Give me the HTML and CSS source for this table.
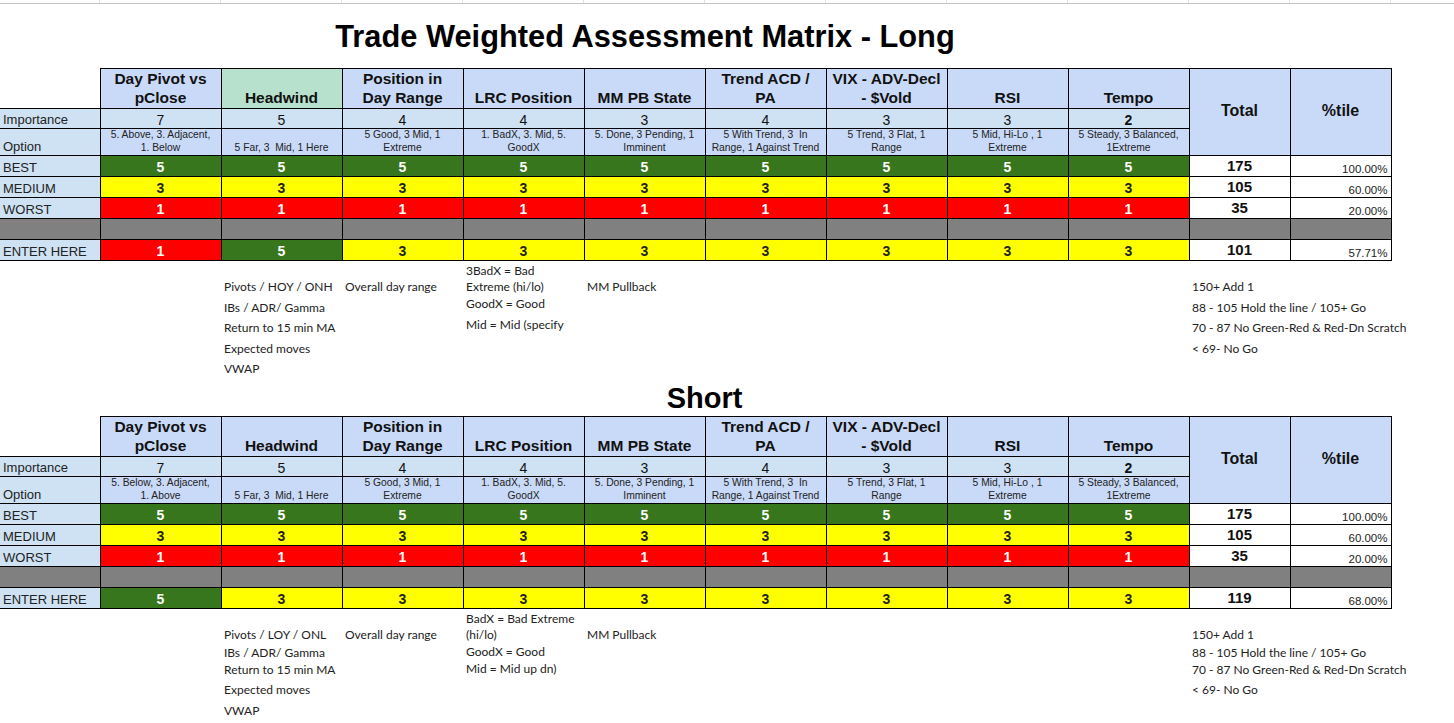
FILE: index.html
```html
<!DOCTYPE html>
<html>
<head>
<meta charset="utf-8">
<title>Trade Weighted Assessment Matrix</title>
<link rel="stylesheet" href="styles.css">
</head>
<body>
<div class="sheet">
  <div class="strip"><span></span><span></span><span></span><span></span><span></span><span></span><span></span><span></span><span></span><span></span><span></span><span></span><span class="last"></span></div>

  <h1 class="title title-long">Trade Weighted Assessment Matrix - Long</h1>

  <table class="matrix">
    <colgroup><col class="c-lbl"><col class="c-d"><col class="c-d"><col class="c-d"><col class="c-d"><col class="c-d"><col class="c-d"><col class="c-d"><col class="c-d"><col class="c-d"><col class="c-t"><col class="c-t"></colgroup>
    <tr class="r-hdr">
      <td class="corner"></td>
      <td class="hd">Day Pivot vs<br>pClose</td>
      <td class="hd mint">Headwind</td>
      <td class="hd">Position in<br>Day Range</td>
      <td class="hd">LRC Position</td>
      <td class="hd">MM PB State</td>
      <td class="hd">Trend ACD /<br>PA</td>
      <td class="hd">VIX - ADV-Decl<br>- $Vold</td>
      <td class="hd">RSI</td>
      <td class="hd">Tempo</td>
      <td class="toth" rowspan="3">Total</td>
      <td class="toth" rowspan="3">%tile</td>
    </tr>
    <tr class="r-imp">
      <td class="lbl">Importance</td>
      <td class="imp">7</td><td class="imp">5</td><td class="imp">4</td><td class="imp">4</td><td class="imp">3</td><td class="imp">4</td><td class="imp">3</td><td class="imp">3</td><td class="imp bold">2</td>
    </tr>
    <tr class="r-opt">
      <td class="lbl">Option</td>
      <td class="opt">5. Above, 3. Adjacent,<br>1. Below</td>
      <td class="opt">5 Far, 3&nbsp; Mid, 1 Here</td>
      <td class="opt">5 Good, 3 Mid, 1<br>Extreme</td>
      <td class="opt">1. BadX, 3. Mid, 5.<br>GoodX</td>
      <td class="opt">5. Done, 3 Pending, 1<br>Imminent</td>
      <td class="opt">5 With Trend, 3&nbsp; In<br>Range, 1 Against Trend</td>
      <td class="opt">5 Trend, 3 Flat, 1<br>Range</td>
      <td class="opt">5 Mid, Hi-Lo , 1<br>Extreme</td>
      <td class="opt">5 Steady, 3 Balanced,<br>1Extreme</td>
    </tr>
    <tr class="r-val">
      <td class="lbl">BEST</td>
      <td class="v g">5</td><td class="v g">5</td><td class="v g">5</td><td class="v g">5</td><td class="v g">5</td><td class="v g">5</td><td class="v g">5</td><td class="v g">5</td><td class="v g">5</td>
      <td class="tot">175</td><td class="pct">100.00%</td>
    </tr>
    <tr class="r-val">
      <td class="lbl">MEDIUM</td>
      <td class="v y">3</td><td class="v y">3</td><td class="v y">3</td><td class="v y">3</td><td class="v y">3</td><td class="v y">3</td><td class="v y">3</td><td class="v y">3</td><td class="v y">3</td>
      <td class="tot">105</td><td class="pct">60.00%</td>
    </tr>
    <tr class="r-val">
      <td class="lbl">WORST</td>
      <td class="v r">1</td><td class="v r">1</td><td class="v r">1</td><td class="v r">1</td><td class="v r">1</td><td class="v r">1</td><td class="v r">1</td><td class="v r">1</td><td class="v r">1</td>
      <td class="tot">35</td><td class="pct">20.00%</td>
    </tr>
    <tr class="r-val">
      <td class="lbl k"></td>
      <td class="k"></td><td class="k"></td><td class="k"></td><td class="k"></td><td class="k"></td><td class="k"></td><td class="k"></td><td class="k"></td><td class="k"></td><td class="k"></td><td class="k"></td>
    </tr>
    <tr class="r-val">
      <td class="lbl">ENTER HERE</td>
      <td class="v r">1</td><td class="v g">5</td><td class="v y">3</td><td class="v y">3</td><td class="v y">3</td><td class="v y">3</td><td class="v y">3</td><td class="v y">3</td><td class="v y">3</td>
      <td class="tot">101</td><td class="pct">57.71%</td>
    </tr>
  </table>

  <div class="notes notes-long">
    <div class="nc"></div>
    <div class="nc pt16">
      <span class="ln h20">Pivots / HOY / ONH</span>
      <span class="ln h20">IBs / ADR/ Gamma</span>
      <span class="ln h20">Return to 15 min MA</span>
      <span class="ln h20">Expected moves</span>
      <span class="ln h20">VWAP</span>
    </div>
    <div class="nc pt16"><span class="ln h20">Overall day range</span></div>
    <div class="nc pt2">
      <span class="ln h16">3BadX = Bad</span>
      <span class="ln h16">Extreme (hi/lo)</span>
      <span class="ln h17">GoodX = Good</span>
      <span class="ln h26">Mid = Mid (specify</span>
    </div>
    <div class="nc pt16"><span class="ln h20">MM Pullback</span></div>
    <div class="nc"></div>
    <div class="nc pt16">
      <span class="ln h20">150+ Add 1</span>
      <span class="ln h20">88 - 105 Hold the line / 105+ Go</span>
      <span class="ln h20">70 - 87 No Green-Red &amp; Red-Dn Scratch</span>
      <span class="ln h20">&lt; 69- No Go</span>
    </div>
  </div>

  <h2 class="title title-short">Short</h2>

  <table class="matrix">
    <colgroup><col class="c-lbl"><col class="c-d"><col class="c-d"><col class="c-d"><col class="c-d"><col class="c-d"><col class="c-d"><col class="c-d"><col class="c-d"><col class="c-d"><col class="c-t"><col class="c-t"></colgroup>
    <tr class="r-hdr">
      <td class="corner"></td>
      <td class="hd">Day Pivot vs<br>pClose</td>
      <td class="hd">Headwind</td>
      <td class="hd">Position in<br>Day Range</td>
      <td class="hd">LRC Position</td>
      <td class="hd">MM PB State</td>
      <td class="hd">Trend ACD /<br>PA</td>
      <td class="hd">VIX - ADV-Decl<br>- $Vold</td>
      <td class="hd">RSI</td>
      <td class="hd">Tempo</td>
      <td class="toth" rowspan="3">Total</td>
      <td class="toth" rowspan="3">%tile</td>
    </tr>
    <tr class="r-imp">
      <td class="lbl">Importance</td>
      <td class="imp">7</td><td class="imp">5</td><td class="imp">4</td><td class="imp">4</td><td class="imp">3</td><td class="imp">4</td><td class="imp">3</td><td class="imp">3</td><td class="imp bold">2</td>
    </tr>
    <tr class="r-opt">
      <td class="lbl">Option</td>
      <td class="opt">5. Below, 3. Adjacent,<br>1. Above</td>
      <td class="opt">5 Far, 3&nbsp; Mid, 1 Here</td>
      <td class="opt">5 Good, 3 Mid, 1<br>Extreme</td>
      <td class="opt">1. BadX, 3. Mid, 5.<br>GoodX</td>
      <td class="opt">5. Done, 3 Pending, 1<br>Imminent</td>
      <td class="opt">5 With Trend, 3&nbsp; In<br>Range, 1 Against Trend</td>
      <td class="opt">5 Trend, 3 Flat, 1<br>Range</td>
      <td class="opt">5 Mid, Hi-Lo , 1<br>Extreme</td>
      <td class="opt">5 Steady, 3 Balanced,<br>1Extreme</td>
    </tr>
    <tr class="r-val">
      <td class="lbl">BEST</td>
      <td class="v g">5</td><td class="v g">5</td><td class="v g">5</td><td class="v g">5</td><td class="v g">5</td><td class="v g">5</td><td class="v g">5</td><td class="v g">5</td><td class="v g">5</td>
      <td class="tot">175</td><td class="pct">100.00%</td>
    </tr>
    <tr class="r-val">
      <td class="lbl">MEDIUM</td>
      <td class="v y">3</td><td class="v y">3</td><td class="v y">3</td><td class="v y">3</td><td class="v y">3</td><td class="v y">3</td><td class="v y">3</td><td class="v y">3</td><td class="v y">3</td>
      <td class="tot">105</td><td class="pct">60.00%</td>
    </tr>
    <tr class="r-val">
      <td class="lbl">WORST</td>
      <td class="v r">1</td><td class="v r">1</td><td class="v r">1</td><td class="v r">1</td><td class="v r">1</td><td class="v r">1</td><td class="v r">1</td><td class="v r">1</td><td class="v r">1</td>
      <td class="tot">35</td><td class="pct">20.00%</td>
    </tr>
    <tr class="r-val">
      <td class="lbl k"></td>
      <td class="k"></td><td class="k"></td><td class="k"></td><td class="k"></td><td class="k"></td><td class="k"></td><td class="k"></td><td class="k"></td><td class="k"></td><td class="k"></td><td class="k"></td>
    </tr>
    <tr class="r-val">
      <td class="lbl">ENTER HERE</td>
      <td class="v g">5</td><td class="v y">3</td><td class="v y">3</td><td class="v y">3</td><td class="v y">3</td><td class="v y">3</td><td class="v y">3</td><td class="v y">3</td><td class="v y">3</td>
      <td class="tot">119</td><td class="pct">68.00%</td>
    </tr>
  </table>

  <div class="notes notes-short">
    <div class="nc"></div>
    <div class="nc pt17">
      <span class="ln h18">Pivots / LOY / ONL</span>
      <span class="ln h17">IBs / ADR/ Gamma</span>
      <span class="ln h17">Return to 15 min MA</span>
      <span class="ln h24">Expected moves</span>
      <span class="ln h18">VWAP</span>
    </div>
    <div class="nc pt17"><span class="ln h18">Overall day range</span></div>
    <div class="nc pt2">
      <span class="ln h16">BadX = Bad Extreme</span>
      <span class="ln h16">(hi/lo)</span>
      <span class="ln h17">GoodX = Good</span>
      <span class="ln h17">Mid = Mid up dn)</span>
    </div>
    <div class="nc pt17"><span class="ln h18">MM Pullback</span></div>
    <div class="nc"></div>
    <div class="nc pt17">
      <span class="ln h18">150+ Add 1</span>
      <span class="ln h17">88 - 105 Hold the line / 105+ Go</span>
      <span class="ln h17">70 - 87 No Green-Red &amp; Red-Dn Scratch</span>
      <span class="ln h24">&lt; 69- No Go</span>
    </div>
  </div>
</div>
</body>
</html>
```

FILE: styles.css
```css
html, body {
  margin: 0;
  padding: 0;
  background: #ffffff;
}

.sheet {
  width: 1454px;
  height: 723px;
  overflow: hidden;
  font-family: "Liberation Sans", Arial, sans-serif;
  color: #000;
}

/* top grid strip (cut-off spreadsheet row) */
.strip {
  display: grid;
  grid-template-columns: 100px repeat(9, 121px) 101px 101px 1fr;
  height: 3px;
  border-bottom: 1px solid #c4c4c4;
}
.strip span {
  border-right: 1px solid #e2e2e2;
}
.strip span.last {
  border-right: none;
}

/* titles */
.title {
  margin: 0;
  font-family: "Liberation Sans", Arial, sans-serif;
  font-weight: bold;
  text-align: center;
  color: #000;
  box-sizing: border-box;
}
.title-long {
  width: 1290px;
  height: 64px;
  padding-top: 2px;
  font-size: 30.8px;
  line-height: 62px;
}
.title-short {
  width: 1409px;
  height: 35px;
  font-size: 29px;
  line-height: 35px;
}

/* matrix tables */
.matrix {
  border-collapse: collapse;
  table-layout: fixed;
  width: 1391px;
  border: none;
  font-family: "Liberation Sans", Arial, sans-serif;
}
.c-lbl { width: 100px; }
.c-d { width: 121px; }
.c-t { width: 101px; }

.matrix td {
  border: 1px solid #000;
  padding: 0 2px;
  text-align: center;
  vertical-align: bottom;
  overflow: hidden;
  white-space: nowrap;
  color: #111;
}

.r-hdr { height: 39px; }
.r-imp { height: 20px; }
.r-opt { height: 27px; }
.r-val { height: 21px; }

.corner {
  background: #fff;
  border-top-style: hidden !important;
  border-left-style: hidden !important;
}

.hd {
  background: #c9daf8;
  font-weight: bold;
  font-size: 15.5px;
  line-height: 19px;
  padding-bottom: 1px !important;
}
.hd.mint {
  background: #b7e1cd;
}

.toth {
  background: #c9daf8;
  font-weight: bold;
  font-size: 16px;
  vertical-align: middle !important;
  padding-bottom: 2px !important;
}

.lbl {
  background: #cfe2f3;
  text-align: left !important;
  padding-left: 3px !important;
  font-size: 13px;
  line-height: 16px;
  border-left-style: hidden !important;
  color: #222 !important;
}

.imp {
  background: #cfe2f3;
  font-size: 14px;
  line-height: 16px;
}
.bold { font-weight: bold; }

.opt {
  background: #c9daf8;
  font-size: 10.3px;
  line-height: 12.5px;
  color: #222 !important;
  padding-bottom: 1px !important;
}

.v {
  font-weight: bold;
  font-size: 14px;
  line-height: 16px;
  padding-bottom: 1px !important;
}
.g { background: #38761d; color: #fff !important; }
.y { background: #ffff00; color: #222 !important; }
.r { background: #ff0000; color: #fff !important; }
.k { background: #808080; }

.tot {
  background: #fff;
  font-weight: bold;
  font-size: 15px;
  line-height: 17px;
  vertical-align: middle !important;
  padding-bottom: 2px !important;
}
.pct {
  background: #fff;
  text-align: right !important;
  font-size: 11.5px;
  line-height: 13px;
  padding-right: 3px !important;
  color: #222 !important;
}

/* notes under tables */
.notes {
  display: grid;
  grid-template-columns: 221px 121px 121px 121px 121px 484px 1fr;
  font-family: Lato, "Open Sans", sans-serif;
  font-size: 12px;
  color: #222;
  box-sizing: border-box;
}
.notes-long { height: 120px; }
.notes-short { height: 116px; }

.nc {
  padding-left: 3px;
  white-space: nowrap;
}
.ln { display: block; }

.pt2 { padding-top: 2px; }
.pt16 { padding-top: 16px; }
.pt17 { padding-top: 17px; }

.h16 { height: 16px; line-height: 16px; }
.h17 { height: 17px; line-height: 17px; }
.h18 { height: 18px; line-height: 18px; }
.h20 { height: 20.5px; line-height: 20.5px; }
.h24 { height: 24px; line-height: 24px; }
.h26 { height: 26px; line-height: 26px; }
```
